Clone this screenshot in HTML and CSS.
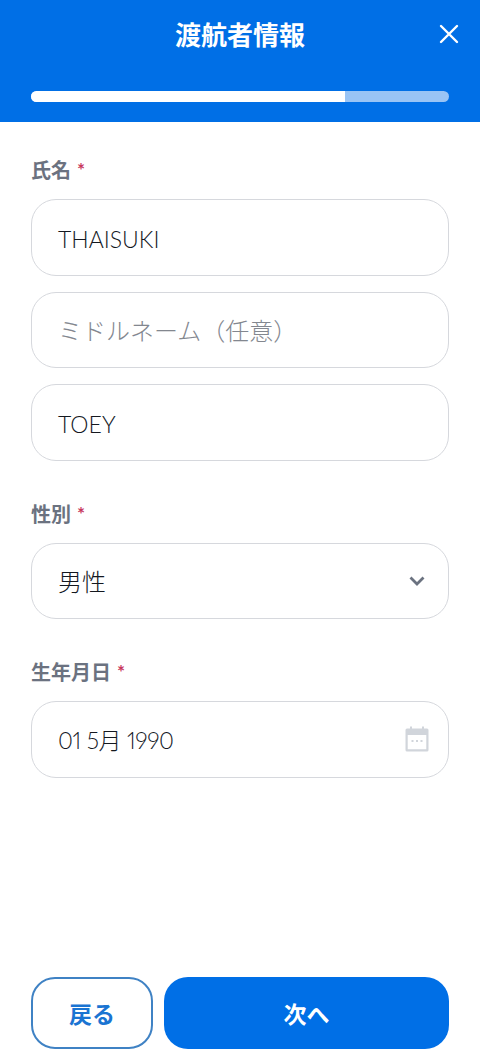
FILE: index.html
```html
<!DOCTYPE html>
<html lang="ja">
<head>
    <meta charset="UTF-8">
    <meta name="viewport" content="width=device-width, initial-scale=1.0">
    <title>渡航者情報</title>
    <link rel="stylesheet" href="styles.css">
</head>
<body>
    <div class="page">
        <header class="header">
            <div class="title-row">
                <h1 class="title">渡航者情報</h1>
                <button class="close" aria-label="閉じる">
                    <svg width="20" height="20" viewBox="0 0 20 20"><path d="M2 2 L18 18 M18 2 L2 18" stroke="#fff" stroke-width="2.4" stroke-linecap="round"/></svg>
                </button>
            </div>
            <div class="progress"><div class="progress-fill"></div></div>
        </header>

        <main class="form">
            <div class="group">
                <label class="label">氏名<span class="req">*</span></label>
                <div class="stack">
                    <div class="field field-latin">THAISUKI</div>
                    <div class="field field-cjk placeholder">ミドルネーム（任意）</div>
                    <div class="field field-latin">TOEY</div>
                </div>
            </div>

            <div class="group">
                <label class="label">性別<span class="req">*</span></label>
                <div class="field field-cjk">
                    男性
                    <svg class="chevron" width="16" height="10" viewBox="0 0 16 10"><path d="M1.5 1.5 L8 8 L14.5 1.5" fill="none" stroke="#6b7280" stroke-width="2.8"/></svg>
                </div>
            </div>

            <div class="group">
                <label class="label">生年月日<span class="req">*</span></label>
                <div class="field">
                    <span class="date-text">01 5月 1990</span>
                    <svg class="calendar" width="24" height="26" viewBox="0 0 24 26">
                        <path d="M5 0.5 h2 v3 h-2 z M17 0.5 h2 v3 h-2 z" fill="#d1d5db"/>
                        <path fill-rule="evenodd" d="M2 2.5 h20 a1.5 1.5 0 0 1 1.5 1.5 v20 a1.5 1.5 0 0 1 -1.5 1.5 h-20 a1.5 1.5 0 0 1 -1.5 -1.5 v-20 a1.5 1.5 0 0 1 1.5 -1.5 z M2.7 9 v14.3 h18.6 v-14.3 z" fill="#d1d5db"/>
                        <path d="M6.5 14 h2 v2 h-2 z M11 14 h2 v2 h-2 z M15.5 14 h2 v2 h-2 z" fill="#d1d5db"/>
                    </svg>
                </div>
            </div>
        </main>

        <footer class="footer">
            <button class="btn btn-back">戻る</button>
            <button class="btn btn-next">次へ</button>
        </footer>
    </div>
</body>
</html>
```

FILE: styles.css
```css
* {
    box-sizing: border-box;
}
body {
    margin: 0;
    font-family: Lato, "Noto Sans CJK JP", sans-serif;
    background: #fff;
    color: #14181f;
}
.page {
    height: 1064px;
    display: flex;
    flex-direction: column;
}
.header {
    height: 122px;
    background: #006fe6;
    padding: 0 31px;
}
.title-row {
    height: 91px;
    padding-bottom: 24px;
    display: flex;
    align-items: center;
    justify-content: center;
    position: relative;
}
.title {
    margin: 0;
    color: #fff;
    font-size: 26px;
    font-weight: 700;
}
.close {
    position: absolute;
    right: -10px;
    top: 24px;
    padding: 0;
    border: none;
    background: none;
    line-height: 0;
}
.progress {
    height: 11px;
    border-radius: 6px;
    background: #99c4f5;
    overflow: hidden;
}
.progress-fill {
    width: 75%;
    height: 100%;
    background: #fff;
}
.form {
    flex: 1;
    padding: 33px 31px 0;
    display: flex;
    flex-direction: column;
    gap: 38px;
}
.label {
    display: block;
    margin-bottom: 15px;
    font-size: 20px;
    line-height: 29px;
    height: 29px;
    font-weight: 700;
    color: #6b7280;
}
.req {
    margin-left: 6px;
    color: #c8385e;
    font-size: 19px;
    vertical-align: 1px;
}
.stack {
    display: flex;
    flex-direction: column;
    gap: 16px;
}
.field {
    height: 76.5px;
    padding: 0 26px;
    display: flex;
    align-items: center;
    justify-content: space-between;
    border: 1.5px solid #d6d8dd;
    border-radius: 25px;
    font-size: 23px;
    font-weight: 300;
    font-variant-numeric: proportional-nums;
}
.field-latin {
    padding-top: 3px;
}
.field-cjk {
    font-size: 24px;
}
.date-text {
    letter-spacing: -0.4px;
}
.placeholder {
    color: #83878f;
}
.chevron {
    margin-right: -3px;
}
.calendar {
    margin-right: -7px;
}
.footer {
    padding: 0 31px 15px;
    display: flex;
    gap: 11px;
}
.btn {
    height: 72px;
    border-radius: 24px;
    font-family: inherit;
    font-size: 23px;
    font-weight: 700;
}
.btn-back {
    width: 122px;
    background: #fff;
    color: #1a74d2;
    border: 2px solid #3f82c4;
}
.btn-next {
    flex: 1;
    background: #006fe6;
    color: #fff;
    border: none;
}
```
